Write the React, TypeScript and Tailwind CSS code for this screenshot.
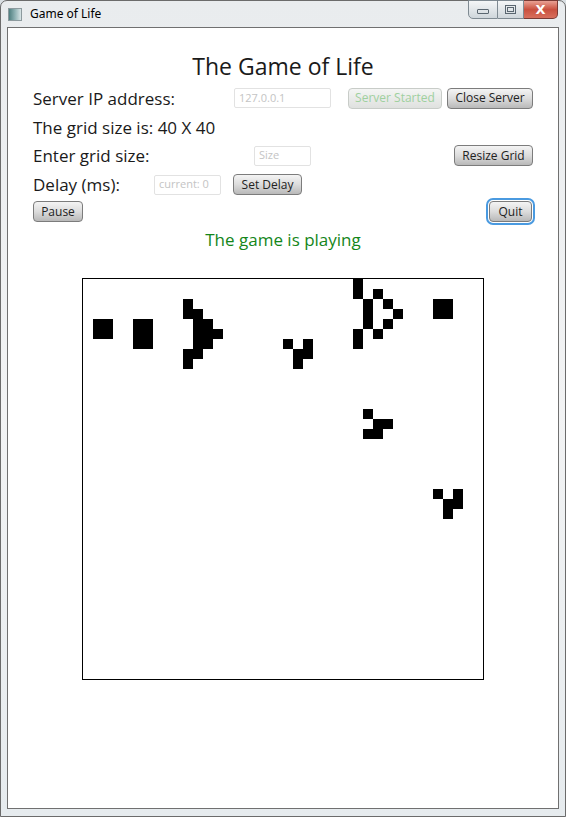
import React from "react";

const LIVE: [number, number][] = [
  // [row, col]
  [4, 1], [4, 2], [5, 1], [5, 2],
  [4, 5], [4, 6], [5, 5], [5, 6], [6, 5], [6, 6],
  [2, 10], [3, 10], [3, 11], [4, 11], [4, 12], [5, 11], [5, 12], [5, 13], [6, 11], [6, 12], [7, 10], [7, 11], [8, 10],
  [0, 27], [1, 27], [1, 29], [2, 28], [2, 30], [3, 28], [3, 31], [4, 28], [4, 30], [5, 27], [5, 29], [6, 27],
  [2, 35], [2, 36], [3, 35], [3, 36],
  [6, 20], [6, 22], [7, 21], [7, 22], [8, 21],
  [13, 28], [14, 29], [14, 30], [15, 28], [15, 29],
  [21, 35], [21, 37], [22, 36], [22, 37], [23, 36],
];

const liveSet = new Set(LIVE.map(([r, c]) => r * 40 + c));

const font = { fontFamily: '"Open Sans", "Noto Sans", sans-serif' };

function Btn({ children, className = "", disabled = false, focused = false }: { children: React.ReactNode; className?: string; disabled?: boolean; focused?: boolean }) {
  const base = disabled
    ? "border-[#c8ccc8] bg-gradient-to-b from-[#f4f5f4] to-[#dfe1df] text-[#9fd09f]"
    : "border-[#7c7c7c] bg-gradient-to-b from-[#f4f4f4] via-[#dcdcdc] to-[#b9b9b9] text-[#222]";
  return (
    <div
      className={`flex h-[21px] items-center justify-center rounded-[4px] border text-[12px] leading-none ${base} ${
        focused ? "outline outline-2 outline-[#4a9ae0] outline-offset-[1px]" : ""
      } ${className}`}
    >
      {children}
    </div>
  );
}

function Input({ placeholder, className = "" }: { placeholder: string; className?: string }) {
  return (
    <div className={`flex h-[20px] items-center rounded-[2px] border border-[#e2e2e2] bg-white px-[4px] text-[11px] text-[#c4c4c4] ${className}`}>
      {placeholder}
    </div>
  );
}

export default function App() {
  return (
    <div className="relative h-[817px] w-[566px] overflow-hidden bg-[#d9dfe3]" style={font}>
      {/* outer frame */}
      <div className="flex h-full w-full flex-col rounded-t-[7px] border border-[#6b6b6b] bg-gradient-to-b from-[#e9ecee] via-[#f2f3f4] to-[#e6ebee] px-[6px] pb-[7px]">
        {/* title bar */}
        <div className="flex h-[26px] shrink-0 items-start">
          <div className="mt-[7px] ml-[1px] h-[13px] w-[14px] border border-[#8c9a9e] bg-gradient-to-r from-[#4f7f80] via-[#8fb2b4] to-[#d8e4e6]" />
          <div className="ml-[8px] mt-[5px] text-[12px] leading-[16px] text-black" style={{ fontFamily: '"Noto Sans", sans-serif' }}>
            Game of Life
          </div>
          <div className="ml-auto mr-[1px] mt-[-1px] flex h-[19px]">
            <div className="flex w-[30px] items-center justify-center rounded-bl-[5px] border border-[#7f8a92] bg-gradient-to-b from-[#f4f6f7] to-[#cfd6db]">
              <div className="mt-[4px] h-[5px] w-[12px] rounded-[1px] border border-[#5a6670]" />
            </div>
            <div className="flex w-[26px] items-center justify-center border-y border-r border-[#7f8a92] bg-gradient-to-b from-[#f4f6f7] to-[#cfd6db]">
              <div className="h-[9px] w-[11px] border border-[#5a6670] p-[1px]">
                <div className="h-full w-full border border-[#5a6670]" />
              </div>
            </div>
            <div className="flex w-[34px] items-center justify-center rounded-br-[5px] border-y border-r border-[#7a3a34] bg-gradient-to-b from-[#e8a093] via-[#c9503f] to-[#d86f5d] text-[13px] font-bold leading-none text-white" style={{ fontFamily: '"DejaVu Sans", sans-serif' }}>
              X
            </div>
          </div>
        </div>
        {/* client area */}
        <div className="flex flex-1 flex-col border border-[#707070] bg-white px-[25px]">
          <div className="mt-[22px] h-[32px] text-center text-[23px] leading-[32px] text-[#1a1a1a]">The Game of Life</div>
          {/* row 1 */}
          <div className="mt-[5px] flex h-[22px] items-center">
            <div className="w-[201px] text-[17px] leading-none text-[#1a1a1a]">Server IP address:</div>
            <Input placeholder="127.0.0.1" className="w-[97px]" />
            <Btn disabled className="ml-[17px] w-[94px]">Server Started</Btn>
            <Btn className="ml-[5px] w-[86px]">Close Server</Btn>
          </div>
          {/* row 2 */}
          <div className="mt-[7px] flex h-[22px] items-center text-[17px] leading-none text-[#1a1a1a]">The grid size is: 40 X 40</div>
          {/* row 3 */}
          <div className="mt-[7px] flex h-[21px] items-center">
            <div className="w-[221px] text-[17px] leading-none text-[#1a1a1a]">Enter grid size:</div>
            <Input placeholder="Size" className="w-[57px]" />
            <Btn className="ml-auto w-[79px]">Resize Grid</Btn>
          </div>
          {/* row 4 */}
          <div className="mt-[8px] flex h-[21px] items-center">
            <div className="w-[121px] text-[17px] leading-none text-[#1a1a1a]">Delay (ms):</div>
            <Input placeholder="current: 0" className="w-[67px]" />
            <Btn className="ml-[12px] w-[69px]">Set Delay</Btn>
          </div>
          {/* row 5 */}
          <div className="mt-[6px] flex h-[21px] items-center justify-between">
            <Btn className="w-[50px]">Pause</Btn>
            <Btn focused className="mr-[1px] w-[43px]">Quit</Btn>
          </div>
          {/* status */}
          <div className="mt-[6px] text-center text-[17px] leading-[24px] text-[#14861a]">The game is playing</div>
          {/* grid */}
          <div className="mt-[26px] flex justify-center">
            <div className="border border-black">
              <div className="grid h-[400px] w-[400px] grid-cols-[repeat(40,10px)] grid-rows-[repeat(40,10px)]">
                {Array.from({ length: 1600 }, (_, i) => (
                  <div key={i} className={liveSet.has(i) ? "bg-black" : "bg-white"} />
                ))}
              </div>
            </div>
          </div>
        </div>
      </div>
    </div>
  );
}
